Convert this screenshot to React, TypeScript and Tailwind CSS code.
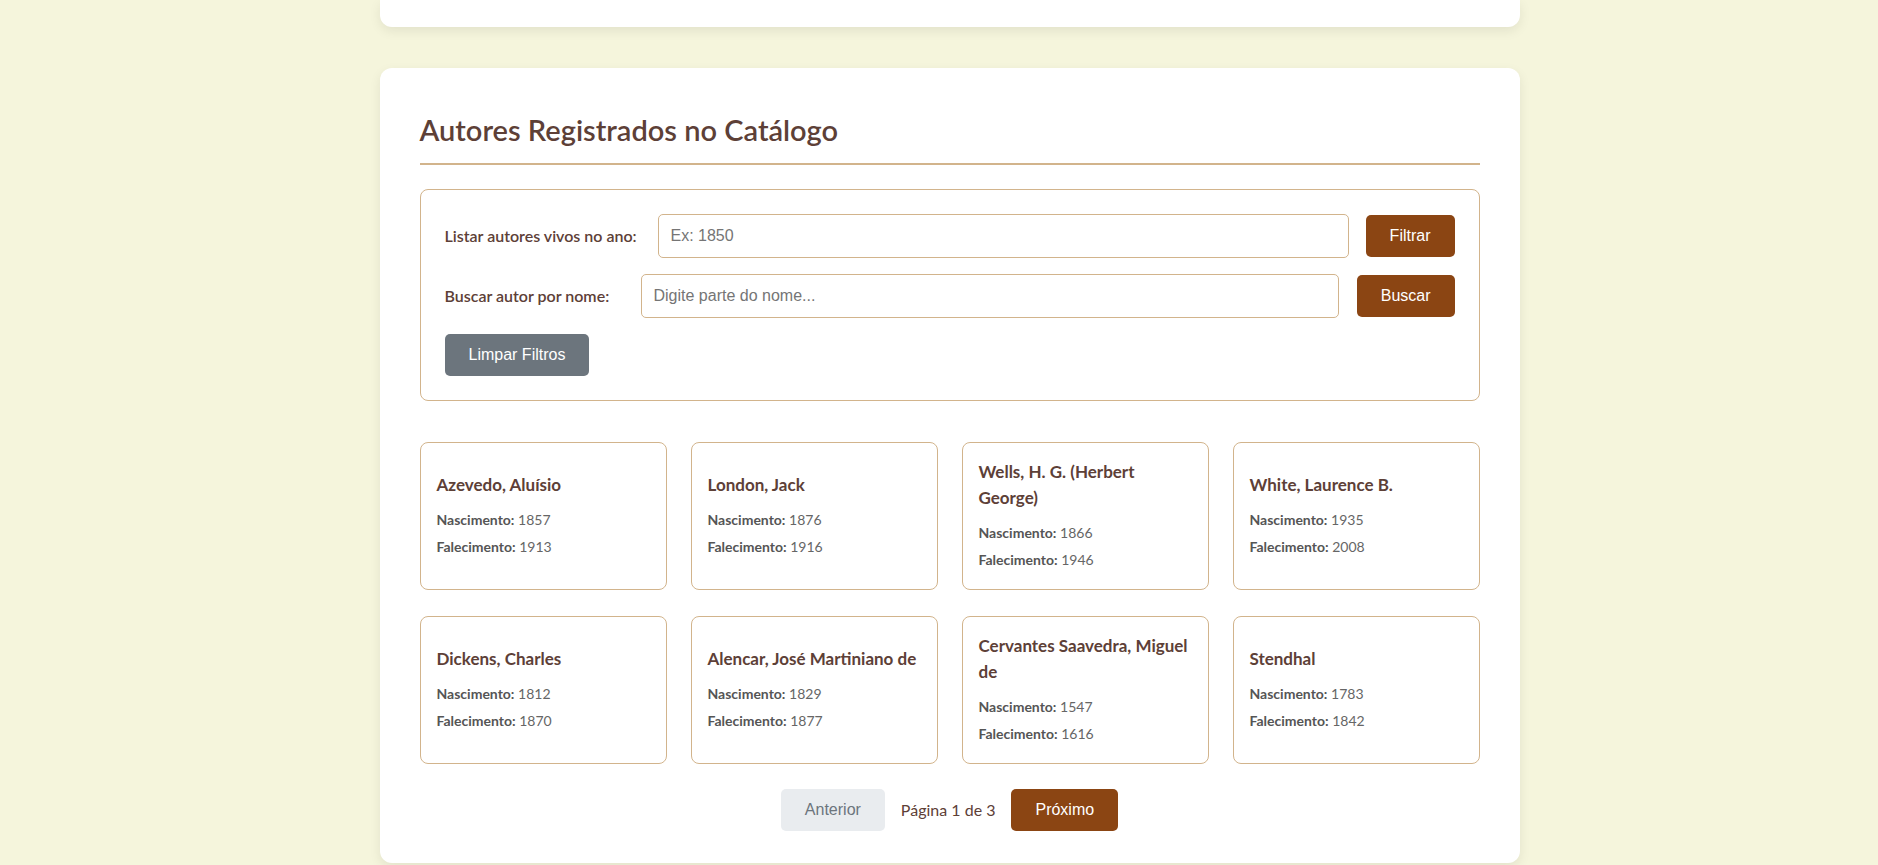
import React, { useState } from 'react'

interface Author {
  name: string
  birth: number
  death: number
}

const authors: Author[] = [
  { name: 'Azevedo, Aluísio', birth: 1857, death: 1913 },
  { name: 'London, Jack', birth: 1876, death: 1916 },
  { name: 'Wells, H. G. (Herbert George)', birth: 1866, death: 1946 },
  { name: 'White, Laurence B.', birth: 1935, death: 2008 },
  { name: 'Dickens, Charles', birth: 1812, death: 1870 },
  { name: 'Alencar, José Martiniano de', birth: 1829, death: 1877 },
  { name: 'Cervantes Saavedra, Miguel de', birth: 1547, death: 1616 },
  { name: 'Stendhal', birth: 1783, death: 1842 },
]

const AuthorCard: React.FC<{ author: Author }> = ({ author }) => (
  <div className="flex flex-col justify-center rounded-[8px] border border-[#d2b48c] bg-white p-4">
    <h3 className="mb-3 text-[17px] font-bold leading-[26px] text-[#5d4037]">{author.name}</h3>
    <p className="mb-[7px] text-[14px] leading-5 text-[#666]">
      <span className="font-bold text-[#555]">Nascimento:</span> {author.birth}
    </p>
    <p className="mb-[3px] text-[14px] leading-5 text-[#666]">
      <span className="font-bold text-[#555]">Falecimento:</span> {author.death}
    </p>
  </div>
)

const App: React.FC = () => {
  const [year, setYear] = useState('')
  const [name, setName] = useState('')

  return (
    <div className="min-h-screen bg-[#f5f5dc] font-['Lato',sans-serif]">
      <div className="flex justify-center pl-[21px]">
        <div className="w-[1140px]">
          {/* previous section, scrolled mostly out of view */}
          <div className="h-[27px] rounded-b-[12px] bg-white shadow-[0_4px_12px_rgba(0,0,0,0.08)]" />

          {/* Authors section */}
          <div className="mt-[41px] rounded-[12px] bg-white px-10 pb-8 pt-10 shadow-[0_4px_12px_rgba(0,0,0,0.08)]">
            <h2 className="mt-[5px] border-b-2 border-[#d2b48c] pb-4 text-[29px] font-semibold leading-[34px] text-[#5d4037]">
              Autores Registrados no Catálogo
            </h2>

            {/* Filters */}
            <div className="mt-6 rounded-[8px] border border-[#d2b48c] p-6">
              <div className="flex items-center">
                <label className="mr-[15px] w-[198px] shrink-0 text-[16px] font-semibold text-[#5d4037]">
                  Listar autores vivos no ano:
                </label>
                <input
                  value={year}
                  onChange={(e) => setYear(e.target.value)}
                  placeholder="Ex: 1850"
                  className="h-[44px] min-w-0 flex-1 rounded-[5px] border border-[#d2b48c] px-3 font-['Liberation_Sans',Arial,sans-serif] text-[16px] text-[#333] outline-none placeholder:text-[#757575]"
                />
                <button className="ml-[17px] h-[42px] rounded-[5px] bg-[#8b4513] px-6 font-['Liberation_Sans',Arial,sans-serif] text-[16px] text-white">
                  Filtrar
                </button>
              </div>

              <div className="mt-4 flex items-center">
                <label className="mr-[15px] w-[181px] shrink-0 text-[16px] font-semibold text-[#5d4037]">
                  Buscar autor por nome:
                </label>
                <input
                  value={name}
                  onChange={(e) => setName(e.target.value)}
                  placeholder="Digite parte do nome..."
                  className="h-[44px] min-w-0 flex-1 rounded-[5px] border border-[#d2b48c] px-3 font-['Liberation_Sans',Arial,sans-serif] text-[16px] text-[#333] outline-none placeholder:text-[#757575]"
                />
                <button className="ml-[18px] h-[42px] rounded-[5px] bg-[#8b4513] px-6 font-['Liberation_Sans',Arial,sans-serif] text-[16px] text-white">
                  Buscar
                </button>
              </div>

              <button className="mt-4 h-[42px] rounded-[5px] bg-[#6c757d] px-6 font-['Liberation_Sans',Arial,sans-serif] text-[16px] text-white">
                Limpar Filtros
              </button>
            </div>

            {/* Authors grid */}
            <div className="mt-[41px] grid grid-cols-4 gap-x-6 gap-y-[26px]">
              {authors.map((a) => (
                <AuthorCard key={a.name} author={a} />
              ))}
            </div>

            {/* Pagination */}
            <div className="mt-[25px] flex items-center justify-center gap-4">
              <button
                disabled
                className="h-[42px] rounded-[5px] bg-[#e9ecef] px-6 font-['Liberation_Sans',Arial,sans-serif] text-[16px] text-[#6c757d]"
              >
                Anterior
              </button>
              <span className="text-[16px] text-[#5d4037]">Página 1 de 3</span>
              <button className="h-[42px] rounded-[5px] bg-[#8b4513] px-6 font-['Liberation_Sans',Arial,sans-serif] text-[16px] text-white">
                Próximo
              </button>
            </div>
          </div>
        </div>
      </div>
    </div>
  )
}

export default App
